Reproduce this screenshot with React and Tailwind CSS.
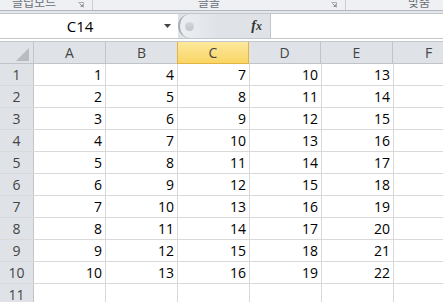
import React from 'react';

const cols = ['A', 'B', 'C', 'D', 'E', 'F'];
const rows = Array.from({ length: 11 }, (_, i) => i + 1);

function cellValue(row, colIdx) {
  if (row > 10 || colIdx > 4) return '';
  return row + colIdx * 3;
}

function Launcher() {
  return (
    <svg width="6" height="6" viewBox="0 0 6 6" className="block">
      <path d="M0.5 0.5 H5.5 V5.5" fill="none" stroke="#a8adb3" strokeWidth="1" />
      <path d="M1.5 1.5 L4.5 4.5 M2.5 4.5 H4.5 V2.5" fill="none" stroke="#8a9097" strokeWidth="1" />
    </svg>
  );
}

export default function App() {
  return (
    <div
      className="w-[443px] h-[302px] overflow-hidden bg-white select-none"
      style={{ fontFamily: '"Open Sans", "Noto Sans CJK KR", sans-serif' }}
    >
      {/* 리본 하단 그룹 라벨 */}
      <div className="h-[11px] bg-[#eef0f3] border-b border-[#b3b8be] flex text-[12px] leading-[12px] text-[#6a6f76] overflow-hidden">
        <div className="w-[92px] flex items-start pl-[12px] pr-[8px] justify-between">
          <span className="-mt-[4px]" style={{ fontFamily: '"Noto Sans CJK KR", sans-serif' }}>클립보드</span>
          <span className="mt-[2px]"><Launcher /></span>
        </div>
        <div className="w-px bg-[#c9cdd2]" />
        <div className="w-[252px] flex items-start justify-between pl-[105px] pr-[8px]">
          <span className="-mt-[4px]" style={{ fontFamily: '"Noto Sans CJK KR", sans-serif' }}>글꼴</span>
          <span className="mt-[2px]"><Launcher /></span>
        </div>
        <div className="w-px bg-[#c9cdd2]" />
        <div className="flex-1 flex items-start pl-[62px]">
          <span className="-mt-[4px]" style={{ fontFamily: '"Noto Sans CJK KR", sans-serif' }}>맞춤</span>
        </div>
      </div>

      <div className="h-[2px] bg-[#e3e6ea]" />

      {/* 수식 입력줄 */}
      <div className="h-[26px] flex border-y border-[#c3c7cc] bg-[#dfe3e8]">
        <div className="w-[178px] bg-white flex items-center">
          <div className="w-[160px] text-center text-[15px] text-black leading-none">C14</div>
          <svg width="8" height="5" viewBox="0 0 8 5" className="ml-[4px]">
            <path d="M0 0 H7 L3.5 4 Z" fill="#444" />
          </svg>
        </div>
        <div className="w-[92px] relative flex items-center">
          <div className="absolute left-0 top-0 w-[40px] h-[24px] rounded-l-full border-l-2 border-[#a9afb6] bg-gradient-to-r from-[#eceff2] to-[#dfe3e8]" />
          <div className="absolute left-[7px] top-[8px] w-[9px] h-[9px] rounded-full bg-gradient-to-b from-[#d4d8dc] to-[#c2c6cb]" />
          <span
            className="relative ml-auto mr-[8px] text-[14px] italic font-bold text-[#333] leading-none"
            style={{ fontFamily: '"Liberation Serif", serif' }}
          >
            f<span className="text-[12px]">x</span>
          </span>
        </div>
        <div className="flex-1 bg-white border-l border-[#c3c7cc]" />
      </div>

      <div className="h-[3px] bg-white border-b border-[#c3c7cc]" />

      {/* 시트 그리드 */}
      <div className="text-[14px] leading-none">
        <div className="flex h-[22px] bg-[#dfe3e8] border-b border-[#c0c4c9]">
          <div className="w-[34px] shrink-0 border-r border-[#c0c4c9] relative">
            <svg width="13" height="13" viewBox="0 0 13 13" className="absolute left-[16px] top-[6px]">
              <path d="M13 0 V13 H0 Z" fill="#b7bcc2" />
            </svg>
          </div>
          {cols.map((c) => (
            <div
              key={c}
              className={
                c === 'C'
                  ? 'w-[72px] shrink-0 flex items-center justify-center bg-gradient-to-b from-[#fde89c] to-[#f9d563] border-x border-b border-[#e2b443] -ml-px -mb-px text-[#444]'
                  : 'w-[72px] shrink-0 flex items-center justify-center border-r border-[#c0c4c9] text-[#444]'
              }
            >
              {c}
            </div>
          ))}
        </div>

        {rows.map((r) => (
          <div key={r} className="flex h-[22px] border-b border-[#d9d9d9]">
            <div className="w-[34px] shrink-0 bg-[#dfe3e8] border-r border-[#c0c4c9] flex items-center justify-center text-[#444]">
              {r}
            </div>
            {cols.map((c, ci) => (
              <div
                key={c}
                className="w-[72px] shrink-0 border-r border-[#d9d9d9] flex items-center justify-end pr-[3px] text-black"
              >
                {cellValue(r, ci)}
              </div>
            ))}
          </div>
        ))}
      </div>
    </div>
  );
}
